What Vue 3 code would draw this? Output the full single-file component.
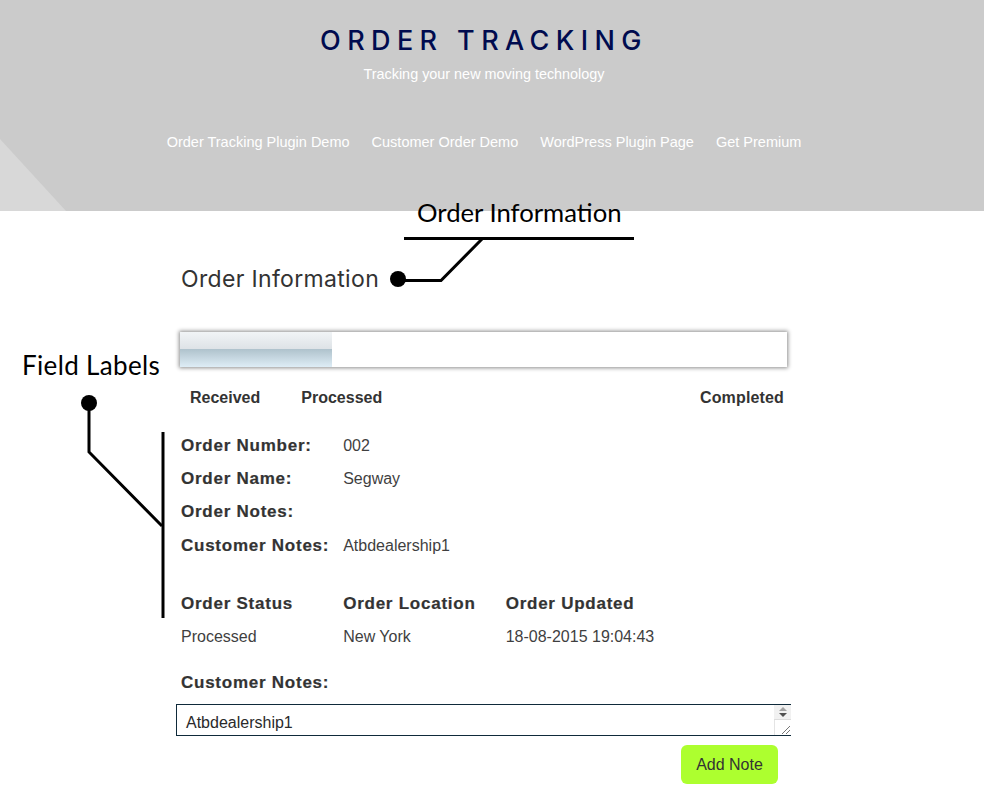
<template>
  <div class="page">
    <header class="site-header">
      <svg class="corner" width="66" height="72" viewBox="0 0 66 72"><polygon points="0,0 66,72 0,72" fill="#d8d8d8" /></svg>
      <h1 class="site-title">ORDER TRACKING</h1>
      <p class="tagline">Tracking your new moving technology</p>
      <nav class="site-nav">
        <a v-for="link in links" :key="link">{{ link }}</a>
      </nav>
    </header>

    <main class="content">
      <h2 class="section-title">Order Information</h2>

      <div class="progress">
        <div class="progress-fill" :style="{ width: progress + 'px' }"></div>
      </div>
      <div class="progress-labels">
        <span class="received">Received</span>
        <span class="processed">Processed</span>
        <span class="completed">Completed</span>
      </div>

      <div v-for="row in fields" :key="row.label" class="field-row">
        <div class="field-label">{{ row.label }}</div>
        <div class="field-value">{{ row.value }}</div>
      </div>

      <div class="status-table">
        <div v-for="head in statusHeads" :key="head" class="field-label">{{ head }}</div>
        <div v-for="val in statusValues" :key="val" class="field-value">{{ val }}</div>
      </div>

      <div class="field-label notes-label">Customer Notes:</div>
      <div class="notes-box">
        <textarea class="notes-input" :value="notes"></textarea>
        <div class="fake-scroll">
          <div class="scroll-arrows">
            <span class="arrow-up"></span>
            <span class="arrow-down"></span>
          </div>
          <svg class="grip" width="16" height="18" viewBox="0 0 16 18">
            <path d="M7 17 L15 9 M11 17 L15 13" stroke="#777" stroke-width="1" fill="none" />
          </svg>
        </div>
      </div>
      <div class="note-actions">
        <button class="add-note">Add Note</button>
      </div>
    </main>

    <!-- annotation callouts drawn on top of the page -->
    <svg class="callouts" width="984" height="809" viewBox="0 0 984 809">
      <g fill="none" stroke="#000">
        <path d="M404 238.500 H634" stroke-width="3" />
        <path d="M398 280.500 H441 L483 238" stroke-width="3" />
        <path d="M89 403 V452 L162 526" stroke-width="3" />
        <path d="M163 432 V618" stroke-width="3" />
      </g>
      <circle cx="398" cy="279" r="8" fill="#000" />
      <circle cx="89" cy="403" r="8" fill="#000" />
    </svg>
    <div class="callout-text callout-info">Order Information</div>
    <div class="callout-text callout-fields">Field Labels</div>
  </div>
</template>

<script setup>
const links = ['Order Tracking Plugin Demo', 'Customer Order Demo', 'WordPress Plugin Page', 'Get Premium']
const progress = 152
const notes = 'Atbdealership1'

const fields = [
  { label: 'Order Number:', value: '002' },
  { label: 'Order Name:', value: 'Segway' },
  { label: 'Order Notes:', value: '' },
  { label: 'Customer Notes:', value: 'Atbdealership1' }
]
const statusHeads = ['Order Status', 'Order Location', 'Order Updated']
const statusValues = ['Processed', 'New York', '18-08-2015 19:04:43']
</script>

<style>
html, body {
  margin: 0;
  background: #fff;
  overflow: hidden;
}
</style>

<style scoped>
.page {
  position: relative;
  height: 809px;
  overflow: hidden;
  font-family: "Liberation Sans", Arial, sans-serif;
  font-size: 16px;
  color: #333;
}

.site-header {
  position: relative;
  height: 211px;
  box-sizing: border-box;
  padding: 26px 16px 0 0;
  background: #cbcbcb;
  text-align: center;
  color: #fff;
}

.corner {
  position: absolute;
  left: 0;
  bottom: 0;
}

.site-title {
  position: relative;
  margin: 0;
  font-family: Inter, "Open Sans", sans-serif;
  font-size: 27px;
  line-height: 30px;
  font-weight: 500;
  letter-spacing: 6.400px;
  color: #000b4f;
}

.tagline {
  position: relative;
  margin: 8px 0 0;
  font-size: 14.400px;
  line-height: 20px;
}

.site-nav {
  position: relative;
  display: flex;
  justify-content: center;
  gap: 22px;
  margin-top: 48px;
  font-size: 14.500px;
  line-height: 20px;
}

.content {
  box-sizing: border-box;
  width: 984px;
  padding: 0 0 0 181px;
}

.section-title {
  margin: 54px 0 0;
  font-family: Inter, "Open Sans", sans-serif;
  font-size: 23px;
  line-height: 28px;
  font-weight: 400;
  letter-spacing: 0.33px;
  color: #333;
}

.progress {
  width: 607px;
  height: 35px;
  margin: 39px 0 0 -1px;
  background: #fff;
  box-shadow: 0 0 4px 1px rgba(0, 0, 0, 0.45);
}

.progress-fill {
  height: 100%;
  background: linear-gradient(180deg, #f1f4f6 0%, #dde2e6 50%, #b0c3cd 50%, #deedf6 100%);
}

.progress-labels {
  display: flex;
  width: 603px;
  margin-top: 21px;
  font-weight: 700;
  line-height: 20px;
}

.received {
  margin-left: 9px;
}

.processed {
  margin-left: 41px;
}

.completed {
  margin-left: auto;
  letter-spacing: 0.15px;
}

.field-row {
  display: grid;
  grid-template-columns: 162.200px 1fr;
  height: 33.300px;
  align-items: center;
}

.progress-labels + .field-row {
  margin-top: 21px;
}

.field-label {
  font-size: 17px;
  font-weight: 700;
  letter-spacing: 0.75px;
  line-height: 20px;
  -webkit-text-stroke: 0.2px #333;
}

.field-value {
  color: #3f3f3f;
}

.status-table {
  display: grid;
  grid-template-columns: 162.200px 162.500px 1fr;
  grid-auto-rows: 33px;
  align-items: center;
  margin-top: 25px;
}

.notes-label {
  margin-top: 20px;
}

.notes-box {
  position: relative;
  width: 615px;
  height: 32px;
  margin: 11px 0 0 -5px;
}

.notes-input {
  display: block;
  box-sizing: border-box;
  width: 100%;
  height: 100%;
  padding: 8px 9px 0;
  border: 1px solid #0f2a3a;
  border-right: 0;
  border-radius: 0;
  outline: 0;
  resize: none;
  overflow: hidden;
  font: 16px/20px "Liberation Sans", Arial, sans-serif;
  color: #2a2a2a;
}

.fake-scroll {
  position: absolute;
  top: 1px;
  right: 0;
  bottom: 1px;
  width: 16px;
  background: #fff;
  border-left: 1px solid #e4e4e4;
}

.scroll-arrows {
  display: flex;
  flex-direction: column;
  align-items: center;
  justify-content: center;
  gap: 2px;
  height: 14px;
  background: #f1f1f1;
  border-bottom: 1px solid #ddd;
  margin-left: -1px;
}

.arrow-up,
.arrow-down {
  width: 0;
  height: 0;
  border-left: 4px solid transparent;
  border-right: 4px solid transparent;
}

.arrow-up {
  border-bottom: 4px solid #a3a3a3;
}

.arrow-down {
  border-top: 4px solid #505050;
}

.grip {
  position: absolute;
  right: 0;
  bottom: 0;
}

.note-actions {
  display: flex;
  justify-content: flex-end;
  width: 597px;
  margin-top: 9px;
}

.add-note {
  width: 97px;
  height: 39px;
  padding: 0;
  border: 0;
  border-radius: 6px;
  background: #adff2f;
  font: 16px "Liberation Sans", Arial, sans-serif;
  color: #333;
}

.callouts {
  position: absolute;
  left: 0;
  top: 0;
  pointer-events: none;
}

.callout-text {
  position: absolute;
  font-family: Lato, sans-serif;
  font-size: 26px;
  line-height: 30px;
  color: #000;
  white-space: nowrap;
}

.callout-info {
  left: 417px;
  top: 197px;
  font-size: 25.700px;
}

.callout-fields {
  left: 22px;
  top: 350px;
  letter-spacing: 0.35px;
}
</style>
